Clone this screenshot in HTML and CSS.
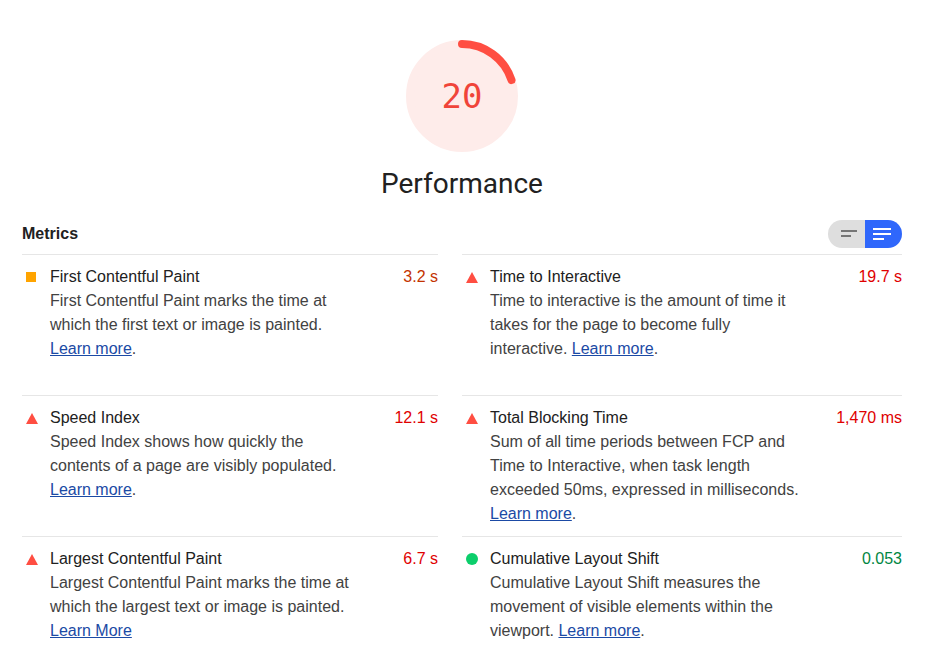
FILE: index.html
```html
<!DOCTYPE html>
<html lang="en">
<head>
  <title>Lighthouse Performance</title>
  <link rel="stylesheet" href="styles.css">
</head>
<body>

  <div class="report">

    <div class="gauge-wrap">
      <div class="gauge">
        <svg class="gauge-svg" width="112" height="112" viewBox="0 0 112 112">
          <circle cx="56" cy="56" r="52" fill="#feecea" stroke="#feecea" stroke-width="8"></circle>
          <!-- 20% of the circumference, starting at 12 o'clock -->
          <circle cx="56" cy="56" r="52" fill="none" stroke="#ff4e42" stroke-width="8"
                  stroke-linecap="round" stroke-dasharray="65.3 400"
                  transform="rotate(-90 56 56)"></circle>
        </svg>
        <span class="gauge-score">20</span>
      </div>
      <div class="gauge-label">Performance</div>
    </div>

    <div class="metrics-header">
      <span class="metrics-title">Metrics</span>
      <div class="toggle">
        <span class="toggle-half toggle-off">
          <svg width="16" height="8" viewBox="0 0 16 8">
            <rect x="0" y="0" width="16" height="2" fill="#757575"></rect>
            <rect x="0" y="5" width="10" height="2" fill="#757575"></rect>
          </svg>
        </span>
        <span class="toggle-half toggle-on">
          <svg width="18" height="12" viewBox="0 0 18 12">
            <rect x="0" y="0" width="18" height="2" fill="#fff"></rect>
            <rect x="0" y="5" width="18" height="2" fill="#fff"></rect>
            <rect x="0" y="10" width="11" height="2" fill="#fff"></rect>
          </svg>
        </span>
      </div>
    </div>

    <div class="metric-grid">

      <div class="metric">
        <span class="icon icon-average"></span>
        <span class="metric-title">First Contentful Paint</span>
        <span class="metric-value average">3.2 s</span>
        <p class="metric-desc">First Contentful Paint marks the time at which the first text or image is painted. <a href="#">Learn more</a>.</p>
      </div>

      <div class="metric">
        <span class="icon icon-fail"></span>
        <span class="metric-title">Time to Interactive</span>
        <span class="metric-value fail">19.7 s</span>
        <p class="metric-desc">Time to interactive is the amount of time it takes for the page to become fully interactive. <a href="#">Learn more</a>.</p>
      </div>

      <div class="metric">
        <span class="icon icon-fail"></span>
        <span class="metric-title">Speed Index</span>
        <span class="metric-value fail">12.1 s</span>
        <p class="metric-desc">Speed Index shows how quickly the contents of a page are visibly populated. <a href="#">Learn more</a>.</p>
      </div>

      <div class="metric">
        <span class="icon icon-fail"></span>
        <span class="metric-title">Total Blocking Time</span>
        <span class="metric-value fail">1,470 ms</span>
        <p class="metric-desc">Sum of all time periods between FCP and Time to Interactive, when task length exceeded 50ms, expressed in milliseconds. <a href="#">Learn more</a>.</p>
      </div>

      <div class="metric">
        <span class="icon icon-fail"></span>
        <span class="metric-title">Largest Contentful Paint</span>
        <span class="metric-value fail">6.7 s</span>
        <p class="metric-desc">Largest Contentful Paint marks the time at which the largest text or image is painted. <a href="#">Learn More</a></p>
      </div>

      <div class="metric">
        <span class="icon icon-pass"></span>
        <span class="metric-title">Cumulative Layout Shift</span>
        <span class="metric-value pass">0.053</span>
        <p class="metric-desc">Cumulative Layout Shift measures the movement of visible elements within the viewport. <a href="#">Learn more</a>.</p>
      </div>

    </div>
  </div>

</body>
</html>
```

FILE: styles.css
```css
body {
  margin: 0;
  background-color: #fff;
  font-family: "Liberation Sans", Arial, sans-serif;
  color: #212121;
}

.report {
  width: 880px;
  margin-left: 22px;
}

/* score gauge */
.gauge-wrap {
  display: flex;
  flex-direction: column;
  align-items: center;
  padding-top: 40px;
}

.gauge {
  position: relative;
  width: 112px;
  height: 112px;
}

.gauge-svg {
  display: block;
}

.gauge-score {
  position: absolute;
  left: 0;
  right: 0;
  top: 0;
  line-height: 112px;
  text-align: center;
  font-family: "DejaVu Sans Mono", monospace;
  font-size: 34px;
  color: #f0443a;
}

.gauge-label {
  margin-top: 16px;
  font-family: Roboto, "Liberation Sans", sans-serif;
  font-size: 28px;
  line-height: 32px;
  color: #212121;
}

/* metrics header */
.metrics-header {
  display: flex;
  justify-content: space-between;
  align-items: center;
  height: 28px;
  margin-top: 20px;
  margin-bottom: 6px;
}

.metrics-title {
  font-weight: bold;
  font-size: 16px;
  color: #212121;
}

.toggle {
  display: flex;
  width: 74px;
  height: 28px;
  border-radius: 14px;
  overflow: hidden;
}

.toggle-half {
  flex: 1;
  display: flex;
  align-items: center;
  justify-content: center;
}

.toggle-off {
  background-color: #dedede;
  padding-left: 4px;
}

.toggle-on {
  background-color: #2f67fb;
  padding-right: 4px;
}

/* metric grid */
.metric-grid {
  display: grid;
  grid-template-columns: 416px 440px;
  grid-auto-rows: 1fr;
  column-gap: 24px;
}

.metric {
  display: grid;
  grid-template-columns: 28px 1fr auto;
  align-content: start;
  border-top: 1px solid #e6e6e6;
  padding: 10px 0 10px;
  font-size: 16px;
  line-height: 24px;
}

.metric-title {
  color: #212121;
}

.metric-value {
  text-align: right;
}

.metric-value.average { color: #c33300; }
.metric-value.fail { color: #e00000; }
.metric-value.pass { color: #018642; }

.metric-desc {
  grid-column: 2 / 4;
  margin: 0;
  max-width: 312px;
  color: #424242;
}

.metric-desc a {
  color: #1b4aa5;
}

/* status icons */
.icon {
  align-self: center;
  margin-left: 4px;
}

.icon-average {
  width: 10px;
  height: 10px;
  background-color: #ffa400;
}

.icon-fail {
  width: 0;
  height: 0;
  border-left: 6px solid transparent;
  border-right: 6px solid transparent;
  border-bottom: 11px solid #ff4e42;
}

.icon-pass {
  width: 12px;
  height: 12px;
  border-radius: 50%;
  background-color: #0cce6b;
}
```
